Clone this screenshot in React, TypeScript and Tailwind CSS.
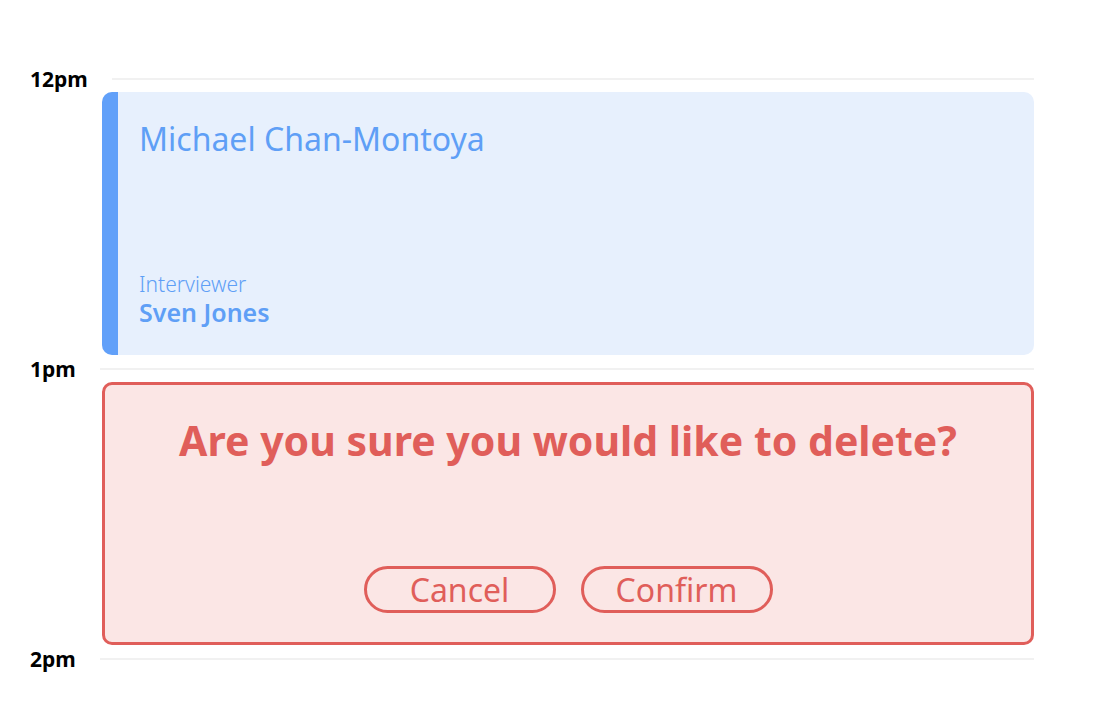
import React from "react";

const FONT = { fontFamily: "'Noto Sans', Lato, sans-serif" };

function HourRow({ label, lineOffset }: { label: string; lineOffset: string }) {
  return (
    <div className="flex h-0 items-center">
      <span className="w-[70px] shrink-0 pl-[30px] text-[21px] font-bold leading-none text-black">{label}</span>
      <div className={`h-[2px] flex-1 bg-[#f1f1f1] ${lineOffset}`} />
    </div>
  );
}

export default function App() {
  return (
    <div className="min-h-screen bg-white" style={FONT}>
      <div className="w-[1034px] pt-[79px]">
        <HourRow label="12pm" lineOffset="ml-[42px]" />

        <div className="ml-[102px] mt-[13px] flex h-[263px] overflow-hidden rounded-[10px] bg-[#e7f0fd]">
          <div className="w-[16px] shrink-0 bg-[#61a0f9]" />
          <div className="flex flex-1 flex-col justify-between pb-[27px] pl-[21px] pt-[31px] text-[#5f9ff6]">
            <div className="text-[32px] leading-none">Michael Chan-Montoya</div>
            <div>
              <div className="text-[21px] font-light leading-tight">Interviewer</div>
              <div className="text-[25px] font-semibold leading-tight">Sven Jones</div>
            </div>
          </div>
        </div>

        <div className="mt-[14px]">
          <HourRow label="1pm" lineOffset="ml-[30px]" />
        </div>

        <div className="ml-[102px] mt-[13px] flex h-[263px] flex-col items-center rounded-[10px] border-[3px] border-[#e05e5a] bg-[#fbe6e5] text-[#e05e5a]">
          <div className="pt-[35px] text-[41px] font-bold leading-none">Are you sure you would like to delete?</div>
          <div className="mt-auto mb-[29px] flex gap-[25px]">
            <button className="h-[47px] w-[192px] rounded-full border-[3px] border-[#e05e5a] text-[32px] leading-none">Cancel</button>
            <button className="h-[47px] w-[192px] rounded-full border-[3px] border-[#e05e5a] text-[32px] leading-none">Confirm</button>
          </div>
        </div>

        <div className="mt-[14px]">
          <HourRow label="2pm" lineOffset="ml-[30px]" />
        </div>
      </div>
    </div>
  );
}
